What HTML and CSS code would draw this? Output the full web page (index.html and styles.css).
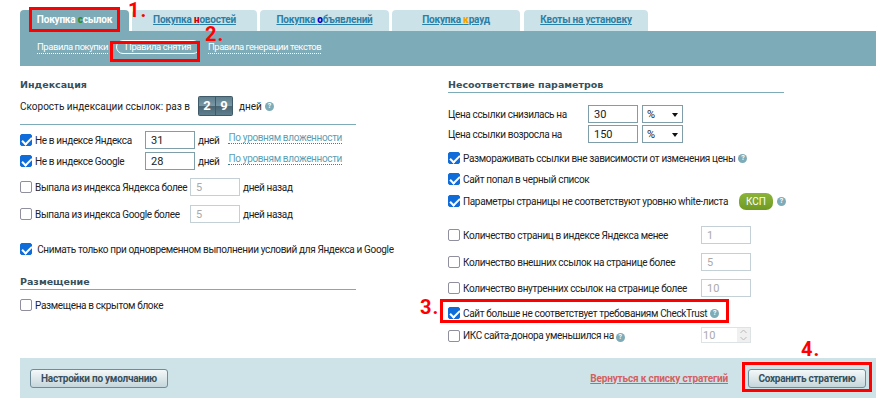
FILE: index.html
```html
<!DOCTYPE html>
<html lang="ru">
<head>
	<meta charset="utf-8">
	<title>Правила снятия</title>
	<link rel="stylesheet" href="styles.css">
</head>
<body>
<div class="page">
	<div class="tabs">
		<a class="tab active">Покупка <b class="g">с</b>сылок</a>
		<a class="tab t2">Покупка <b class="r">н</b>овостей</a>
		<a class="tab t3">Покупка <b class="b">о</b>бъявлений</a>
		<a class="tab t4">Покупка <b class="o">к</b>рауд</a>
		<a class="tab t5">Квоты на установку</a>
	</div>
	<div class="subnav">
		<a class="sub">Правила покупки</a>
		<a class="sub current">Правила снятия</a>
		<a class="sub">Правила генерации текстов</a>
	</div>

	<div class="cols">
		<div class="col">
			<h3 class="head plain">Индексация</h3>
			<div class="speed">
				<span>Скорость индексации ссылок: раз в</span>
				<span class="counter"><i>2</i><i>9</i></span>
				<span>дней</span>
				<span class="hint">?</span>
			</div>
			<div class="row r1">
				<span class="box on"></span><span class="lbl w-a">Не в индексе Яндекса</span>
				<span class="field">31</span><span class="days">дней</span><a class="dots">По уровням вложенности</a>
			</div>
			<div class="row r2">
				<span class="box on"></span><span class="lbl w-a">Не в индексе Google</span>
				<span class="field">28</span><span class="days">дней</span><a class="dots">По уровням вложенности</a>
			</div>
			<div class="row r3">
				<span class="box"></span><span class="lbl w-b">Выпала из индекса Яндекса более</span>
				<span class="field off">5</span><span class="days">дней назад</span>
			</div>
			<div class="row r4">
				<span class="box"></span><span class="lbl w-b">Выпала из индекса Google более</span>
				<span class="field off">5</span><span class="days">дней назад</span>
			</div>
			<div class="row r5">
				<span class="box on"></span><span class="lbl">&nbsp;Снимать только при одновременном выполнении условий для Яндекса и Google</span>
			</div>
			<h3 class="head second">Размещение</h3>
			<div class="row r6">
				<span class="box"></span><span class="lbl">Размещена в скрытом блоке</span>
			</div>
		</div>

		<div class="col">
			<h3 class="head">Несоответствие параметров</h3>
			<div class="price first">
				<span class="lbl w-c">Цена ссылки снизилась на</span>
				<span class="field">30</span><span class="select">%</span>
			</div>
			<div class="price">
				<span class="lbl w-c">Цена ссылки возросла на</span>
				<span class="field">150</span><span class="select">%</span>
			</div>
			<div class="row q1"><span class="box on"></span><span class="lbl">Размораживать ссылки вне зависимости от изменения цены</span><span class="hint">?</span></div>
			<div class="row q2"><span class="box on"></span><span class="lbl">Сайт попал в черный список</span></div>
			<div class="row q3"><span class="box on"></span><span class="lbl">Параметры страницы не соответствуют уровню white-листа</span><span class="ksp">КСП</span><span class="hint">?</span></div>
			<div class="row q4"><span class="box"></span><span class="lbl w-d">Количество страниц в индексе Яндекса менее</span><span class="field off">1</span></div>
			<div class="row q5"><span class="box"></span><span class="lbl w-d">Количество внешних ссылок на странице более</span><span class="field off">5</span></div>
			<div class="row q6"><span class="box"></span><span class="lbl w-d">Количество внутренних ссылок на странице более</span><span class="field off">10</span></div>
			<div class="row q7"><span class="box on"></span><span class="lbl">Сайт больше не соответствует требованиям CheckTrust</span><span class="hint">?</span></div>
			<div class="row q8"><span class="box"></span><span class="lbl w-d">ИКС сайта-донора уменьшился на <span class="hint">?</span></span><span class="field off spin">10<svg width="13" height="14" viewBox="0 0 13 14"><path d="M3.5 5l3-3 3 3M3.5 9l3 3 3-3" fill="none" stroke="#bbb"/></svg></span></div>
		</div>
	</div>

	<div class="footer">
		<a class="btn">Настройки по умолчанию</a>
		<a class="back">Вернуться к списку стратегий</a>
		<a class="btn save">Сохранить стратегию</a>
	</div>

	<span class="mark m1"></span><span class="num n1">1.</span>
	<span class="mark m2"></span><span class="num n2">2.</span>
	<span class="mark m3"></span><span class="num n3">3.</span>
	<span class="mark m4"></span><span class="num n4">4.</span>
</div>
</body>
</html>
```

FILE: styles.css
```css
* {
	box-sizing: border-box;
}
body {
	margin: 0;
	background: #fff;
	font-family: Roboto, "Liberation Sans", sans-serif;
	font-size: 10px;
	letter-spacing: -0.35px;
	color: #222;
}
.page {
	position: relative;
	width: 893px;
	height: 414px;
	padding: 10px 17px 0 20px;
	overflow: hidden;
}

/* tabs */
.tabs {
	display: flex;
	gap: 3px;
	height: 21px;
}
.tab {
	background: #cce2e9;
	border-radius: 4px 4px 0 0;
	text-align: center;
	line-height: 20px;
	font-weight: bold;
	font-size: 10px;
	letter-spacing: -0.2px;
	color: #2a7fa5;
	text-decoration: underline;
}
.tab.active {
	width: 109px;
	background: #7dabb8;
	color: #fff;
	text-decoration: none;
}
.t2 { width: 125px; }
.t3 { width: 129px; }
.t4 { width: 128px; }
.t5 { width: 124px; margin-left: 1px; }
.tab .g { color: #2e8b2e; }
.tab .r { color: #d40000; }
.tab .b { color: #0000d4; }
.tab .o { color: #f5a300; }
.subnav {
	display: flex;
	align-items: center;
	height: 35px;
	background: #7dabb8;
	padding: 0 0 3px 17px;
}
.sub {
	color: #fff;
	border-bottom: 1px dotted #fff;
	font-size: 9.5px;
	letter-spacing: -0.45px;
	line-height: 13px;
}
.sub.current {
	border: 1px solid #fff;
	border-radius: 8px;
	padding: 0 8px;
	margin: 0 8px;
	line-height: 12px;
}

/* columns */
.cols {
	display: grid;
	grid-template-columns: 336px 336px;
	column-gap: 92px;
	height: 292px;
}
.head {
	margin: 12px 0 0;
	height: 15px;
	font-family: "DejaVu Sans", sans-serif;
	font-size: 9.5px;
	letter-spacing: 0;
	line-height: 13px;
	color: #37505c;
	border-bottom: 1px solid #7dabb8;
}
.head.plain {
	border: 0;
}
.head.second {
	margin-top: 17px;
}
.speed {
	display: flex;
	align-items: center;
	height: 32px;
	border-bottom: 1px solid #7dabb8;
	padding-bottom: 5px;
	letter-spacing: 0;
}
.counter {
	display: flex;
	gap: 1px;
	width: 35px;
	height: 20px;
	margin: 0 6px 0 8px;
	padding: 1px;
	background: #3f5a68;
	border-radius: 2px;
}
.counter i {
	flex: 1;
	font-style: normal;
	font-weight: bold;
	font-size: 13px;
	line-height: 18px;
	text-align: center;
	color: #fff;
	background: linear-gradient(#5f7f8e, #7a98a5 50%, #4a6674 52%, #5f7f8e);
}
.speed .hint {
	margin-left: 3px;
}
.row {
	display: flex;
	align-items: center;
	height: 18px;
	white-space: nowrap;
}
.box {
	flex: none;
	width: 12px;
	height: 12px;
	margin-right: 3px;
	border: 1px solid #8f8f9d;
	border-radius: 2px;
	background: #fff;
}
.box.on {
	position: relative;
	background: #0f6cd8;
	border-color: #0f6cd8;
}
.box.on::after {
	content: "";
	position: absolute;
	left: 3px;
	top: 0;
	width: 4px;
	height: 8px;
	border: solid #fff;
	border-width: 0 2px 2px 0;
	transform: rotate(45deg);
}
.w-a { width: 110px; }
.w-b { width: 155px; }
.w-c { width: 140px; }
.w-d { width: 238px; }
.field {
	flex: none;
	display: block;
	width: 50px;
	height: 18px;
	padding-left: 5px;
	border: 1px solid #7f9eaa;
	font-size: 11px;
	letter-spacing: 0;
	line-height: 17px;
	color: #222;
	background: #fff;
}
.field.off {
	border-color: #c3d1d6;
	color: #aaa;
}
.field.spin {
	display: flex;
	justify-content: space-between;
	align-items: center;
	align-self: flex-start;
	height: 16px;
	border-color: #dde3e5;
	padding: 0 0 0 1px;
}
.spin svg {
	background: #f0f0f0;
}
.days {
	margin: 0 3px;
}
.dots {
	margin: 0 0 4px 6px;
	color: #5b9fb4;
	border-bottom: 1px dotted #3f7f94;
}
.r1 { margin-top: 6px; }
.r2 { margin-top: 3px; }
.r3 { margin-top: 8px; }
.r4 { margin-top: 9px; }
.r5 { margin-top: 17px; }
.r6 { margin-top: 6px; }

.price {
	display: flex;
	align-items: center;
	height: 18px;
	margin-top: 2px;
}
.price.first { margin-top: 12px; }
.select {
	position: relative;
	width: 41px;
	height: 18px;
	margin-left: 4px;
	padding-left: 4px;
	border: 1px solid #7f9eaa;
	font-size: 11px;
	letter-spacing: 0;
	line-height: 17px;
}
.select::after {
	content: "";
	position: absolute;
	right: 4px;
	top: 7px;
	border: 3px solid transparent;
	border-top: 4px solid #111;
	border-bottom: 0;
}
.q1 { margin-top: 6px; }
.q2 { margin-top: 3px; }
.q3 { margin-top: 4px; }
.q4 { margin-top: 16px; }
.q5 { margin-top: 9px; }
.q6 { margin-top: 8px; }
.q7 { margin-top: 7px; }
.q8 { margin-top: 5px; }
.q1 .hint, .q7 .hint { margin-left: 3px; }
.hint {
	display: inline-block;
	flex: none;
	width: 9px;
	height: 9px;
	border-radius: 50%;
	background: #7dabb8;
	color: #fff;
	font-size: 7px;
	font-weight: bold;
	letter-spacing: 0;
	line-height: 9px;
	text-align: center;
}
.ksp {
	flex: none;
	width: 34px;
	height: 17px;
	margin: 0 4px 0 11px;
	border-radius: 7px;
	background: linear-gradient(#8cb43a, #6f9a22);
	color: #fff;
	font-size: 10px;
	letter-spacing: 0;
	line-height: 17px;
	text-align: center;
}

/* footer */
.footer {
	display: flex;
	align-items: center;
	height: 40px;
	padding: 0 10px;
	background: #cde3e8;
}
.btn {
	width: 138px;
	height: 19px;
	border: 1px solid #6f8c98;
	border-radius: 3px;
	background: linear-gradient(#f4f8f9, #c5d6dc);
	font-weight: bold;
	font-size: 10px;
	letter-spacing: -0.25px;
	line-height: 17px;
	text-align: center;
	color: #37505c;
	white-space: nowrap;
}
.btn.save {
	width: 118px;
}
.back {
	margin-left: auto;
	margin-right: 20px;
	color: #d4605f;
	font-weight: bold;
	font-size: 10px;
	letter-spacing: -0.15px;
	text-decoration: underline;
}

/* red annotations on top of the screenshot */
.mark {
	position: absolute;
	border: 3px solid #f00;
}
.m1 { left: 29px; top: 7px; width: 91px; height: 25px; }
.m2 { left: 110px; top: 41px; width: 90px; height: 21px; }
.m3 { left: 440px; top: 299px; width: 289px; height: 24px; }
.m4 { left: 742px; top: 362px; width: 130px; height: 30px; }
.num {
	position: absolute;
	font-size: 20px;
	font-weight: bold;
	line-height: 15px;
	letter-spacing: 1px;
	color: #f00;
}
.n1 { left: 128px; top: 3px; }
.n2 { left: 205px; top: 27px; }
.n3 { left: 420px; top: 300px; }
.n4 { left: 801px; top: 342px; }
```
